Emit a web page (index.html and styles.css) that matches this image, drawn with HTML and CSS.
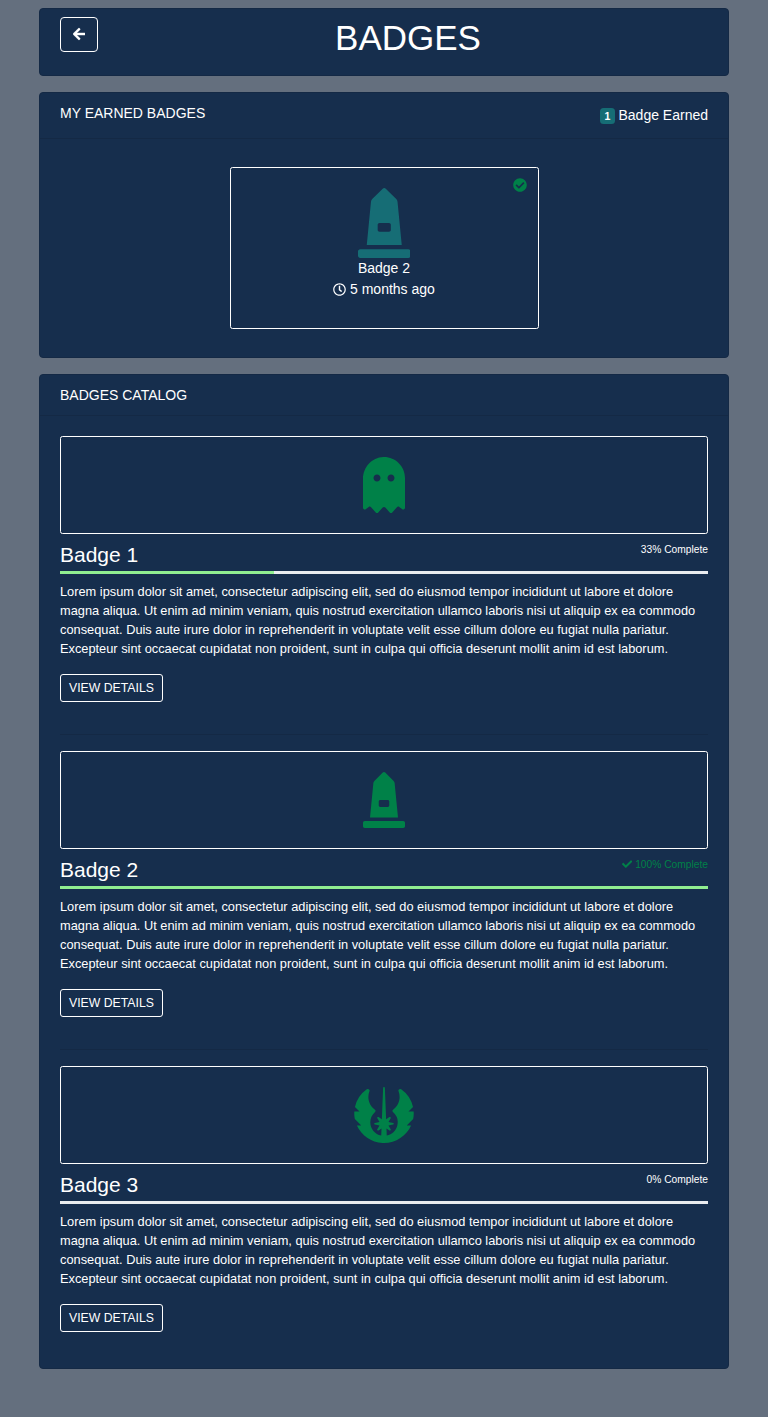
FILE: index.html
```html
<!DOCTYPE html>
<html lang="en">
<head>
<meta charset="utf-8">
<title>Badges</title>
<link rel="stylesheet" href="styles.css">
</head>
<body>
<svg class="sprite" aria-hidden="true">
  <symbol id="arrow-left" viewBox="0 0 448 512"><path d="M257.5 445.1l-22.2 22.2c-9.4 9.4-24.6 9.4-33.9 0L7 273c-9.4-9.4-9.4-24.6 0-33.9L201.4 44.7c9.4-9.4 24.6-9.4 33.9 0l22.2 22.2c9.5 9.5 9.3 25-.4 34.3L136.6 216H424c13.3 0 24 10.7 24 24v32c0 13.3-10.7 24-24 24H136.6l120.5 114.8c9.8 9.3 10 24.8.4 34.3z"/></symbol>
  <symbol id="check" viewBox="0 0 512 512"><path d="M173.898 439.404l-166.4-166.4c-9.997-9.997-9.997-26.206 0-36.204l36.203-36.204c9.997-9.998 26.207-9.998 36.204 0L192 312.69 432.095 72.596c9.997-9.997 26.207-9.997 36.204 0l36.203 36.204c9.997 9.997 9.997 26.206 0 36.204l-294.4 294.401c-9.998 9.997-26.207 9.997-36.204-.001z"/></symbol>
  <symbol id="check-circle" viewBox="0 0 512 512"><path d="M504 256c0 136.967-111.033 248-248 248S8 392.967 8 256 119.033 8 256 8s248 111.033 248 248zM227.314 387.314l184-184c6.248-6.248 6.248-16.379 0-22.627l-22.627-22.627c-6.248-6.249-16.379-6.249-22.628 0L216 308.118l-70.059-70.059c-6.248-6.248-16.379-6.248-22.628 0l-22.627 22.627c-6.248 6.248-6.248 16.379 0 22.627l104 104c6.249 6.249 16.379 6.249 22.628.001z"/></symbol>
  <symbol id="clock" viewBox="0 0 512 512"><path d="M256 8C119 8 8 119 8 256s111 248 248 248 248-111 248-248S393 8 256 8zm0 448c-110.5 0-200-89.5-200-200S145.5 56 256 56s200 89.5 200 200-89.5 200-200 200zm61.8-104.4l-84.9-61.7c-3.1-2.3-4.9-5.9-4.9-9.7V116c0-6.6 5.4-12 12-12h32c6.6 0 12 5.4 12 12v141.7l66.8 48.6c5.4 3.9 6.5 11.4 2.6 16.8L334.6 349c-3.9 5.3-11.4 6.5-16.8 2.6z"/></symbol>
  <symbol id="ghost" viewBox="0 0 384 512"><path d="M186.1.09C81.01 3.24 0 94.92 0 200.05v263.92c0 14.26 17.23 21.39 27.31 11.31l24.92-18.53c6.66-4.95 16-3.99 21.51 2.21l42.95 48.35c6.25 6.25 16.38 6.25 22.63 0l40.72-45.85c6.37-7.17 17.56-7.17 23.92 0l40.72 45.85c6.25 6.25 16.38 6.25 22.63 0l42.95-48.35c5.51-6.2 14.85-7.17 21.51-2.21l24.92 18.53c10.08 10.08 27.31 2.94 27.31-11.31V192C384 84 294.83-3.17 186.1.09zM128 224c-17.67 0-32-14.33-32-32s14.33-32 32-32 32 14.33 32 32-14.33 32-32 32zm128 0c-17.67 0-32-14.33-32-32s14.33-32 32-32 32 14.33 32 32-14.33 32-32 32z"/></symbol>
  <symbol id="monument" viewBox="0 0 384 512"><path d="M368 448H16c-8.84 0-16 7.16-16 16v32c0 8.84 7.16 16 16 16h352c8.84 0 16-7.16 16-16v-32c0-8.84-7.16-16-16-16zm-78.86-347.26a31.97 31.97 0 0 0-9.21-19.44L203.31 4.69c-6.25-6.25-16.38-6.25-22.63 0l-76.6 76.61a31.97 31.97 0 0 0-9.21 19.44L64 416h256l-30.86-315.26zM240 307.2c0 6.4-6.4 12.8-12.8 12.8h-70.4c-6.4 0-12.8-6.4-12.8-12.8v-38.4c0-6.4 6.4-12.8 12.8-12.8h70.4c6.4 0 12.8 6.4 12.8 12.8v38.4z"/></symbol>
  <symbol id="jedi" viewBox="0 0 576 512"><path d="M535.95308,352c-42.64069,94.17188-137.64086,160-247.9959,160q-6.39844,0-12.84377-.29688C171.15558,506.9375,81.26481,442.23438,40.01474,352H79.93668L21.3272,293.40625a264.82522,264.82522,0,0,1-5.10938-39.42187,273.6653,273.6653,0,0,1,.5-29.98438H63.93665L22.546,182.625A269.79782,269.79782,0,0,1,130.51489,20.54688a16.06393,16.06393,0,0,1,9.28127-3,16.36332,16.36332,0,0,1,13.5,7.25,16.02739,16.02739,0,0,1,1.625,15.09374,138.387,138.387,0,0,0-9.84376,51.26563c0,45.10937,21.04691,86.57813,57.71885,113.73437a16.29989,16.29989,0,0,1,1.20313,25.39063c-26.54692,23.98437-41.17194,56.5-41.17194,91.57813,0,60.03124,42.95319,110.28124,99.89079,121.92187l2.5-65.26563L238.062,397a8.33911,8.33911,0,0,1-10-.75,8.025,8.025,0,0,1-1.39063-9.9375l20.125-33.76562-42.06257-8.73438a7.9898,7.9898,0,0,1,0-15.65625l42.06257-8.71875-20.10941-33.73438a7.99122,7.99122,0,0,1,11.35939-10.71874L268.437,295.64062,279.95265,7.67188a7.97138,7.97138,0,0,1,8-7.67188h.04687a8.02064,8.02064,0,0,1,7.95314,7.70312L307.48394,295.625l30.39068-20.67188a8.08327,8.08327,0,0,1,10,.8125,7.99866,7.99866,0,0,1,1.39062,9.90626L329.12461,319.4375l42.07819,8.73438a7.99373,7.99373,0,0,1,0,15.65624l-42.07819,8.71876,20.1094,33.73437a7.97791,7.97791,0,0,1-1.32812,9.92187A8.25739,8.25739,0,0,1,337.87462,397L310.7027,378.53125l2.5,65.34375c48.48446-9.40625,87.57828-48.15625,97.31267-96.5A123.52652,123.52652,0,0,0,371.9528,230.29688a16.30634,16.30634,0,0,1,1.20313-25.42188c36.65631-27.17188,57.6876-68.60938,57.6876-113.73438a138.01689,138.01689,0,0,0-9.85939-51.3125,15.98132,15.98132,0,0,1,1.60937-15.09374,16.36914,16.36914,0,0,1,13.5-7.23438,16.02453,16.02453,0,0,1,9.25,2.98438A271.26947,271.26947,0,0,1,553.25,182.76562L511.99992,224h46.9532C559.3125,229.76562,560,235.45312,560,241.26562a270.092,270.092,0,0,1-5.125,51.85938L495.98427,352Z"/></symbol>
</svg>

<main class="page">
  <header class="card title-bar">
    <a class="back" href="#" aria-label="Back"><svg class="icon-back"><use href="#arrow-left"/></svg></a>
    <h1>BADGES</h1>
  </header>

  <section class="card">
    <div class="card-header">
      <h2>MY EARNED BADGES</h2>
      <div class="count"><span class="pill">1</span> Badge Earned</div>
    </div>
    <div class="card-body earned-list">
      <article class="earned">
        <svg class="earned-check"><use href="#check-circle"/></svg>
        <svg class="earned-icon"><use href="#monument"/></svg>
        <div>Badge 2</div>
        <div><svg class="icon-clock"><use href="#clock"/></svg> 5 months ago</div>
      </article>
    </div>
  </section>

  <section class="card">
    <div class="card-header compact"><h2>BADGES CATALOG</h2></div>
    <div class="card-body">
      <article class="item">
        <div class="frame"><svg class="art"><use href="#ghost"/></svg></div>
        <div class="heading"><h3>Badge 1</h3><span class="status">33% Complete</span></div>
        <div class="progress"><div class="fill" style="width:33%"></div></div>
        <p>Lorem ipsum dolor sit amet, consectetur adipiscing elit, sed do eiusmod tempor incididunt ut labore et dolore magna aliqua. Ut enim ad minim veniam, quis nostrud exercitation ullamco laboris nisi ut aliquip ex ea commodo consequat. Duis aute irure dolor in reprehenderit in voluptate velit esse cillum dolore eu fugiat nulla pariatur. Excepteur sint occaecat cupidatat non proident, sunt in culpa qui officia deserunt mollit anim id est laborum.</p>
        <a class="details" href="#">VIEW DETAILS</a>
      </article>
      <hr>
      <article class="item">
        <div class="frame"><svg class="art"><use href="#monument"/></svg></div>
        <div class="heading"><h3>Badge 2</h3><span class="status done"><svg class="icon-check"><use href="#check"/></svg> 100% Complete</span></div>
        <div class="progress"><div class="fill" style="width:100%"></div></div>
        <p>Lorem ipsum dolor sit amet, consectetur adipiscing elit, sed do eiusmod tempor incididunt ut labore et dolore magna aliqua. Ut enim ad minim veniam, quis nostrud exercitation ullamco laboris nisi ut aliquip ex ea commodo consequat. Duis aute irure dolor in reprehenderit in voluptate velit esse cillum dolore eu fugiat nulla pariatur. Excepteur sint occaecat cupidatat non proident, sunt in culpa qui officia deserunt mollit anim id est laborum.</p>
        <a class="details" href="#">VIEW DETAILS</a>
      </article>
      <hr>
      <article class="item">
        <div class="frame"><svg class="art"><use href="#jedi"/></svg></div>
        <div class="heading"><h3>Badge 3</h3><span class="status">0% Complete</span></div>
        <div class="progress"><div class="fill" style="width:0%"></div></div>
        <p>Lorem ipsum dolor sit amet, consectetur adipiscing elit, sed do eiusmod tempor incididunt ut labore et dolore magna aliqua. Ut enim ad minim veniam, quis nostrud exercitation ullamco laboris nisi ut aliquip ex ea commodo consequat. Duis aute irure dolor in reprehenderit in voluptate velit esse cillum dolore eu fugiat nulla pariatur. Excepteur sint occaecat cupidatat non proident, sunt in culpa qui officia deserunt mollit anim id est laborum.</p>
        <a class="details" href="#">VIEW DETAILS</a>
      </article>
    </div>
  </section>
</main>
</body>
</html>
```
FILE: styles.css
```css
* { box-sizing: border-box; }
body {
  margin: 0;
  background: #646f7e;
  color: #fff;
  font: 14px/21px "Liberation Sans", Arial, sans-serif;
}
.sprite { display: none; }
svg { fill: currentColor; }
h1, h2, h3, p { margin: 0; font-weight: 400; }
a { color: inherit; text-decoration: none; }

.page {
  width: 690px;
  margin: 0 auto;
  padding: 8px 0 48px;
  display: flex;
  flex-direction: column;
  gap: 16px;
}
.card {
  background: #162e4d;
  border: 1px solid #142945;
  border-radius: 4px;
}
.title-bar {
  height: 68px;
  padding: 8px 20px;
  display: flex;
  align-items: flex-start;
}
.back {
  width: 38px;
  height: 35px;
  padding-bottom: 2px;
  border: 1px solid #fff;
  border-radius: 4px;
  display: flex;
  align-items: center;
  justify-content: center;
}
.icon-back { width: 12.25px; height: 14px; stroke: currentColor; stroke-width: 14px; }
h1 {
  flex: 1;
  margin-left: 10px;
  text-align: center;
  font-size: 35px;
  line-height: 42px;
}
.card-header {
  height: 46px;
  padding: 12px 20px;
  border-bottom: 1px solid #142945;
  display: flex;
  justify-content: space-between;
  align-items: flex-start;
}
.card-header.compact { height: 41px; }
h2 { font-size: 14px; line-height: 16.8px; }
.pill {
  display: inline-block;
  padding: 2.625px 4.2px;
  border-radius: 3.5px;
  background: #166d75;
  font-size: 10.5px;
  font-weight: 700;
  line-height: 1;
  vertical-align: baseline;
}
.card-body { padding: 20px; }
.earned-list { display: flex; justify-content: center; padding: 28px 20px; }
.earned {
  position: relative;
  width: 309px;
  height: 162px;
  padding: 20px;
  border: 1px solid #fff;
  border-radius: 2.5px;
  text-align: center;
}
.earned-icon { display: block; width: 52.5px; height: 70px; margin: 0 auto; color: #166d75; }
.earned-check { position: absolute; top: 10px; right: 10.5px; width: 14px; height: 14px; color: #008148; }
.icon-clock { width: 13px; height: 13px; vertical-align: -2px; }

.item { height: 282px; }
.frame {
  height: 98px;
  border: 1px solid #fff;
  border-radius: 2.5px;
  display: flex;
  align-items: center;
  justify-content: center;
}
.art { width: 64px; height: 56px; color: #008148; }
.heading {
  height: 37px;
  padding-top: 8px;
  display: flex;
  justify-content: space-between;
  align-items: flex-start;
}
h3 { font-size: 21px; line-height: 25.2px; }
.status { font-size: 10.24px; line-height: 15px; }
.done { color: #008148; }
.icon-check { width: 10.24px; height: 10.24px; vertical-align: -1.3px; }
.progress { height: 3px; background: #e9ecef; }
.fill { height: 3px; background: #90ee90; }
.item p { margin: 8px 0 16px; font-size: 12.8px; line-height: 19px; }
.details {
  display: inline-block;
  height: 28px;
  padding: 4px 8px;
  border: 1px solid #fff;
  border-radius: 3px;
  font-size: 12.25px;
  line-height: 18px;
}
hr { height: 1px; margin: 16px 0; border: 0; background: #142945; }
```
